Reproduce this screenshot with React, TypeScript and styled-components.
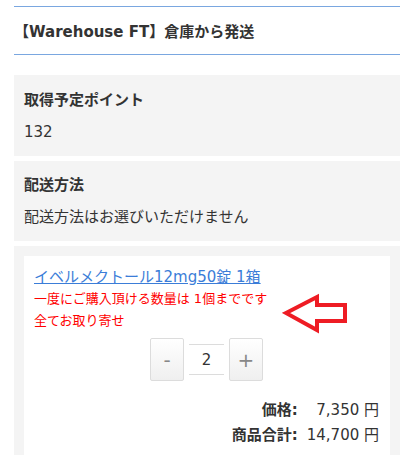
import { createGlobalStyle, styled } from "styled-components";

const GlobalStyle = createGlobalStyle`
    body {
        margin: 0;
        background: #fff;
        color: #333;
        font-family: "DejaVu Sans", "Noto Sans CJK JP", sans-serif;
    }
`;

const Page = styled.div`
    padding: 6px 14px 0;
`;

const ShopHeader = styled.h2`
    margin: 0 0 20px;
    border-top: 1px solid #7aa7e0;
    border-bottom: 1px solid #7aa7e0;
    height: 47px;
    display: flex;
    align-items: center;
    font-size: 15px;
    font-weight: bold;
`;

const InfoBox = styled.div<{ $top: number }>`
    background: #f4f4f4;
    padding: ${(props) => props.$top}px 10px 13px;
    margin-bottom: 5px;
`;

const InfoTitle = styled.div`
    font-size: 15px;
    font-weight: bold;
    line-height: 22px;
    margin-bottom: 10px;
`;

const InfoValue = styled.div`
    font-size: 15px;
    line-height: 22px;
`;

const CartBox = styled.div`
    background: #f4f4f4;
    padding: 10px 10px 0;
`;

const Item = styled.div`
    position: relative;
    background: #fff;
    padding: 10px 11px 20px 10px;
`;

const ItemLink = styled.a`
    display: block;
    font-size: 15px;
    line-height: 22px;
    color: #3b7dd8;
    text-decoration: underline;
`;

const Notice = styled.div`
    font-size: 13px;
    line-height: 22px;
    color: #ff0000;
`;

const Arrow = styled.svg`
    position: absolute;
    left: 258px;
    top: 37px;
`;

const Quantity = styled.div`
    margin-top: 6px;
    display: flex;
    justify-content: center;
    align-items: center;
    gap: 5px;
`;

const QtyButton = styled.button`
    width: 34px;
    height: 43px;
    border: 1px solid #dcdcdc;
    border-radius: 2px;
    background: linear-gradient(#ffffff, #efefef);
    color: #888;
    font-family: "DejaVu Sans", sans-serif;
    font-size: 20px;
    padding: 0;
`;

const QtyInput = styled.div`
    width: 35px;
    height: 29px;
    border-top: 1px solid #dcdcdc;
    border-bottom: 1px solid #dcdcdc;
    display: flex;
    align-items: center;
    justify-content: center;
    font-size: 15px;
    color: #333;
`;

const Totals = styled.div`
    margin-top: 17px;
    display: grid;
    grid-template-columns: auto auto;
    justify-content: end;
    column-gap: 9px;
    font-size: 15px;
    line-height: 25px;
`;

const TotalLabel = styled.div`
    font-weight: bold;
    text-align: right;
`;

const TotalValue = styled.div`
    text-align: right;
`;

export default function App() {
    return (
        <>
            <GlobalStyle />
            <Page>
                <ShopHeader>【Warehouse FT】倉庫から発送</ShopHeader>
                <InfoBox $top={14}>
                    <InfoTitle>取得予定ポイント</InfoTitle>
                    <InfoValue>132</InfoValue>
                </InfoBox>
                <InfoBox $top={13}>
                    <InfoTitle>配送方法</InfoTitle>
                    <InfoValue>配送方法はお選びいただけません</InfoValue>
                </InfoBox>
                <CartBox>
                    <Item>
                        <ItemLink href="#">イベルメクトール12mg50錠 1箱</ItemLink>
                        <Notice>一度にご購入頂ける数量は 1個までです</Notice>
                        <Notice>全てお取り寄せ</Notice>
                        <Arrow width="68" height="42" viewBox="0 0 68 42">
                            <polygon
                                points="4,20 35,4 35,12 63,12 63,28 35,28 35,37"
                                fill="none"
                                stroke="#ee1c24"
                                strokeWidth="4"
                                strokeLinejoin="miter"
                            />
                        </Arrow>
                        <Quantity>
                            <QtyButton>-</QtyButton>
                            <QtyInput>2</QtyInput>
                            <QtyButton>+</QtyButton>
                        </Quantity>
                        <Totals>
                            <TotalLabel>価格:</TotalLabel>
                            <TotalValue>7,350 円</TotalValue>
                            <TotalLabel>商品合計:</TotalLabel>
                            <TotalValue>14,700 円</TotalValue>
                        </Totals>
                    </Item>
                </CartBox>
            </Page>
        </>
    );
}
